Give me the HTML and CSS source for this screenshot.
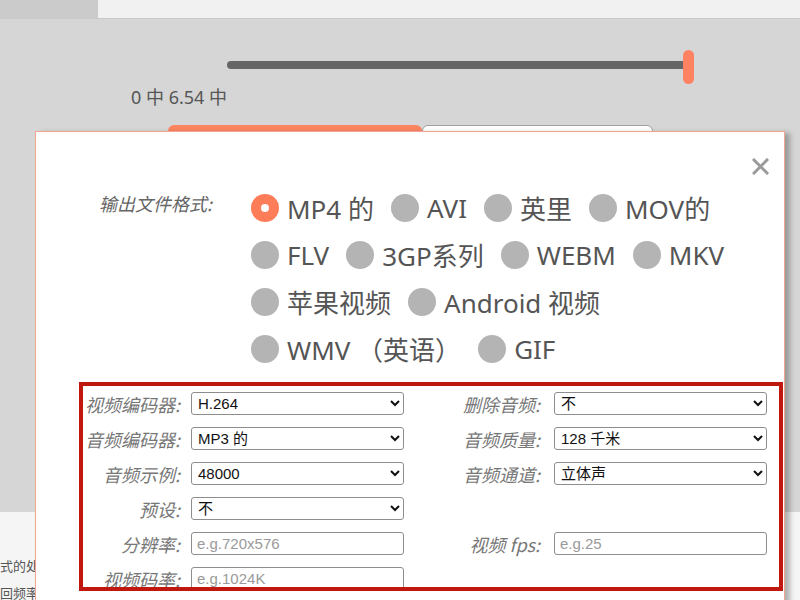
FILE: index.html
```html
<!DOCTYPE html>
<html lang="zh-CN">
<head>
<meta charset="utf-8">
<title>输出设置</title>
<link rel="stylesheet" href="styles.css">
</head>
<body>
<div class="page">
  <header class="topbar">
    <div class="topbar-tab"></div>
    <div class="topbar-rest"></div>
  </header>

  <section class="player">
    <div class="slider">
      <div class="slider-track"></div>
      <div class="slider-thumb"></div>
    </div>
    <div class="time">0 中 6.54 中</div>
    <div class="actions">
      <button class="btn btn-primary"></button>
      <button class="btn btn-secondary"></button>
    </div>
  </section>

  <section class="below">
    <p>式的处理方式</p>
    <p>回频率设置</p>
  </section>

  <div class="modal">
    <button class="modal-close" aria-label="关闭">
      <svg width="17" height="17" viewBox="0 0 17 17"><path d="M2 2 L15 15 M15 2 L2 15" stroke="#9a9a9a" stroke-width="3" stroke-linecap="square" fill="none"/></svg>
    </button>

    <div class="format">
      <div class="format-label">输出文件格式:</div>
      <div class="format-options">
        <div class="radio-row">
          <label class="radio"><span class="dot dot-on"></span>MP4 的</label>
          <label class="radio"><span class="dot"></span>AVI</label>
          <label class="radio"><span class="dot"></span>英里</label>
          <label class="radio"><span class="dot"></span>MOV的</label>
        </div>
        <div class="radio-row">
          <label class="radio"><span class="dot"></span>FLV</label>
          <label class="radio"><span class="dot"></span>3GP系列</label>
          <label class="radio"><span class="dot"></span>WEBM</label>
          <label class="radio"><span class="dot"></span>MKV</label>
        </div>
        <div class="radio-row">
          <label class="radio"><span class="dot"></span>苹果视频</label>
          <label class="radio"><span class="dot"></span>Android 视频</label>
        </div>
        <div class="radio-row">
          <label class="radio"><span class="dot"></span>WMV （英语）</label>
          <label class="radio"><span class="dot"></span>GIF</label>
        </div>
      </div>
    </div>

    <div class="highlight">
      <div class="settings">
        <div class="lbl">视频编码器:</div>
        <select class="ctl"><option>H.264</option></select>
        <div class="lbl lbl-r">删除音频:</div>
        <select class="ctl"><option>不</option></select>

        <div class="lbl">音频编码器:</div>
        <select class="ctl"><option>MP3 的</option></select>
        <div class="lbl lbl-r">音频质量:</div>
        <select class="ctl"><option>128 千米</option></select>

        <div class="lbl">音频示例:</div>
        <select class="ctl"><option>48000</option></select>
        <div class="lbl lbl-r">音频通道:</div>
        <select class="ctl"><option>立体声</option></select>

        <div class="lbl">预设:</div>
        <select class="ctl"><option>不</option></select>
        <div class="lbl lbl-r"></div>
        <div></div>

        <div class="lbl">分辨率:</div>
        <input class="ctl" type="text" placeholder="e.g.720x576">
        <div class="lbl lbl-r">视频 fps:</div>
        <input class="ctl" type="text" placeholder="e.g.25">

        <div class="lbl">视频码率:</div>
        <input class="ctl" type="text" placeholder="e.g.1024K">
        <div class="lbl lbl-r"></div>
        <div></div>
      </div>
    </div>
  </div>
</div>
</body>
</html>
```

FILE: styles.css
```css
* { box-sizing: border-box; }

html, body {
  margin: 0;
  padding: 0;
}

body {
  font-family: "Noto Sans", "Noto Sans CJK SC", sans-serif;
  background: #d6d6d6;
}

.page {
  position: relative;
  width: 800px;
  height: 600px;
  overflow: hidden;
  display: flex;
  flex-direction: column;
}

/* top strip */
.topbar {
  display: flex;
  height: 19px;
  flex: none;
  border-bottom: 1px solid #c9c9c9;
}
.topbar-tab { width: 98px; background: #cbcbcb; }
.topbar-rest { flex: 1; background: #f1f1f1; }

/* player area */
.player {
  flex: none;
  height: 493px;
  background: #d6d6d6;
  padding-top: 31px;
}

.slider {
  display: flex;
  align-items: flex-start;
  padding-left: 227px;
  height: 34px;
}
.slider-track {
  width: 457px;
  height: 8px;
  margin-top: 11px;
  background: #666;
  border-radius: 4px 0 0 4px;
}
.slider-thumb {
  width: 11px;
  height: 34px;
  margin-left: -1px;
  border-radius: 6px;
  background: #fd8262;
}

.time {
  margin-top: 3px;
  padding-left: 131px;
  font-size: 18px;
  line-height: 21px;
  color: #555;
}

.actions {
  display: flex;
  margin-top: 17px;
  padding-left: 168px;
}
.btn {
  height: 40px;
  border: none;
  padding: 0;
  border-radius: 6px 6px 0 0;
}
.btn-primary { width: 254px; background: #fd8461; }
.btn-secondary {
  width: 231px;
  background: #fff;
  border: 1px solid #a0a0a0;
}

/* page content below the player */
.below {
  flex: 1;
  background: #f5f5f5;
  padding-top: 40px;
}
.below p {
  margin: 0;
  font-size: 13px;
  line-height: 27px;
  color: #555;
  font-family: "Noto Sans CJK SC", sans-serif;
}

/* modal dialog */
.modal {
  position: absolute;
  left: 35px;
  top: 131px;
  width: 750px;
  height: 500px;
  background: #fff;
  border: 1px solid #f2a595;
  box-shadow: 5px 2px 5px rgba(0, 0, 0, 0.28);
  padding-top: 52px;
}

.modal-close {
  position: absolute;
  top: 26px;
  right: 15px;
  width: 17px;
  height: 17px;
  padding: 0;
  border: none;
  background: none;
  display: flex;
}

.format {
  display: flex;
  align-items: flex-start;
}
.format-label {
  width: 176px;
  text-align: right;
  font-size: 18px;
  line-height: 38px;
  font-style: italic;
  color: #666;
  font-family: "Noto Sans CJK SC", sans-serif;
  margin-right: 39px;
  white-space: nowrap;
}
.format-options {
  display: flex;
  flex-direction: column;
}
.radio-row {
  display: flex;
  align-items: center;
  height: 47px;
}
.radio {
  display: flex;
  align-items: center;
  margin-right: 17px;
  font-size: 26px;
  color: #555;
  white-space: nowrap;
}
.dot {
  width: 28px;
  height: 28px;
  border-radius: 50%;
  background: #b4b4b4;
  margin-right: 8px;
  flex: none;
}
.dot-on {
  background: #fd7d58;
  position: relative;
}
.dot-on::after {
  content: "";
  position: absolute;
  left: 10px;
  top: 10px;
  width: 8px;
  height: 8px;
  border-radius: 50%;
  background: #fff;
}

/* red highlighted settings box */
.highlight {
  margin-top: 10px;
  margin-left: 43px;
  width: 704px;
  height: 209px;
  border: 4px solid #c0180f;
  overflow: hidden;
  padding-top: 6px;
}

.settings {
  display: grid;
  grid-template-columns: 109px 213px 150px 213px;
  grid-auto-rows: 23px;
  row-gap: 12px;
  margin-left: -1px;
}
.lbl {
  display: flex;
  justify-content: flex-end;
  align-items: center;
  padding-right: 11px;
  font-size: 18px;
  font-style: italic;
  color: #777;
  font-family: "Noto Sans CJK SC", sans-serif;
  white-space: nowrap;
}
.lbl-r { padding-right: 14px; }

.ctl {
  width: 213px;
  height: 23px;
  margin: 0;
  border: 1px solid #8d8d8d;
  border-radius: 3px;
  background: #fff;
  font-family: "Liberation Sans", "Noto Sans CJK SC", sans-serif;
  font-size: 15px;
  color: #111;
}
select.ctl { padding: 0 0 0 2px; }
input.ctl { padding: 0 5px; }
input.ctl::placeholder { color: #9a9a9a; }
```
